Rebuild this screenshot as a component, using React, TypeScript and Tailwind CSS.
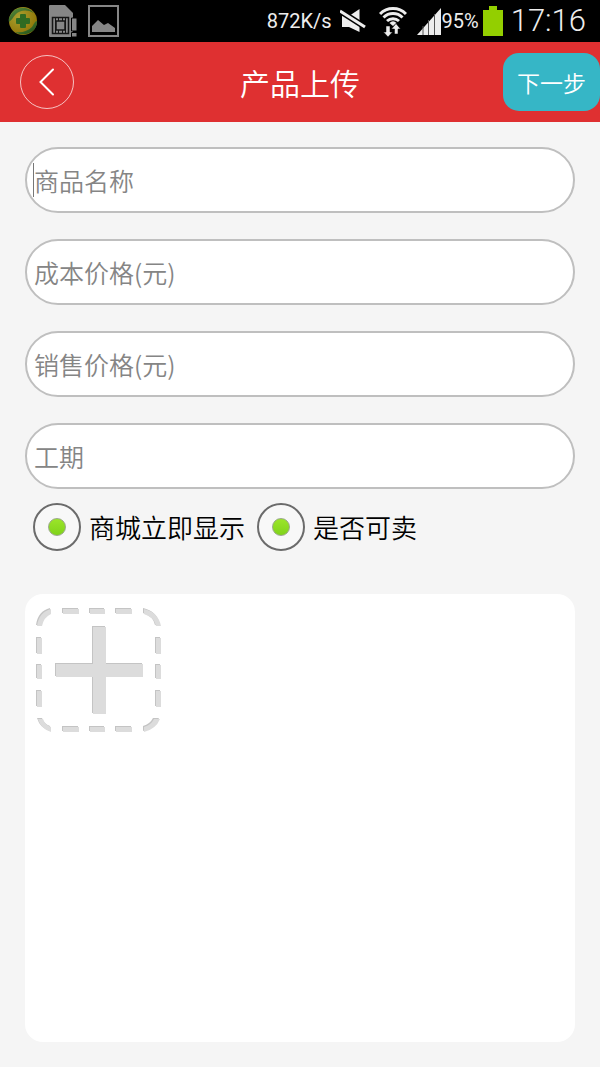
import React, { useState } from 'react';

const FIELDS = [
    { id: 'name', label: '商品名称' },
    { id: 'cost', label: '成本价格(元)' },
    { id: 'price', label: '销售价格(元)' },
    { id: 'period', label: '工期' },
];

const OPTIONS = [
    { id: 'show', label: '商城立即显示' },
    { id: 'sellable', label: '是否可卖' },
];

const ShieldIcon = () => (
    <svg width="30" height="30" viewBox="0 0 30 30" aria-hidden="true">
        <defs>
            <radialGradient id="shield" cx="0.35" cy="0.35" r="0.7">
                <stop offset="0" stopColor="#a8a030" />
                <stop offset="1" stopColor="#8f7406" />
            </radialGradient>
            <linearGradient id="leaf" x1="0" y1="0" x2="1" y2="1">
                <stop offset="0" stopColor="#5d8f3e" />
                <stop offset="1" stopColor="#1c4a14" />
            </linearGradient>
        </defs>
        <circle cx="15" cy="15" r="14" fill="url(#shield)" />
        <path d="M2 10C6 0 19-1 26 7C19 3 12 4 8 8C5 11 4 14 1 16Q0 13 2 10Z" fill="url(#leaf)" />
        <path d="M29 15C30 26 16 32 7 26C14 27 20 25 24 21C26 18 27 15 29 15Z" fill="url(#leaf)" />
        <path d="M13 9h4v4h4v4h-4v4h-4v-4H9v-4h4Z" fill="#2f6b22" stroke="#2f6b22" strokeWidth="2" strokeLinejoin="round" />
    </svg>
);

const SimIcon = () => (
    <svg width="28" height="33" viewBox="0 0 28 33" aria-hidden="true">
        <path d="M1 0H16L24 8V32H1Q0 32 0 31V1Q0 0 1 0Z" fill="#868686" />
        <rect x="3.500" y="12.500" width="16" height="16" fill="none" stroke="#161616" strokeWidth="1.500" />
        <rect x="7" y="16" width="9" height="9" fill="none" stroke="#161616" strokeWidth="1.500" />
        <path d="M9.500 12v4M13.500 12v4M9.500 25v4M13.500 25v4M6.500 12v17M16.500 12v17" stroke="#161616" />
        <path d="M22.500 13H28V26H22.500ZM22.500 27.500H28V32H22.500Z" fill="#868686" stroke="#000" />
    </svg>
);

const PictureIcon = () => (
    <svg width="31" height="32" viewBox="0 0 31 32" aria-hidden="true">
        <rect x="1" y="1" width="29" height="30" fill="none" stroke="#868686" strokeWidth="2" />
        <path d="M4 27V21L10 15L16 20L20 18L27 23V27Z" fill="#868686" />
    </svg>
);

const MuteIcon = () => (
    <svg width="27" height="24" viewBox="0 0 27 24" aria-hidden="true">
        <path d="M2 7H9L19.500 0V23L9 18H2Z" fill="#ededed" />
        <path d="M0 2L25 18" stroke="#000" strokeWidth="6" />
        <path d="M0 2L25 18" stroke="#ededed" strokeWidth="3" />
    </svg>
);

const WifiIcon = () => (
    <svg width="28" height="31" viewBox="0 0 28 31" aria-hidden="true">
        <g fill="none" stroke="#ededed" strokeWidth="3">
            <path d="M1 8A18 18 0 0 1 27 8" />
            <path d="M4.500 11.500A13.500 13.500 0 0 1 23.500 11.500" />
            <path d="M8 15A9 9 0 0 1 20 15" />
        </g>
        <path d="M10.500 17Q14 13.500 17.500 17L14 20Z" fill="#ededed" />
        <path d="M7 20H11V26H13.500L9 31L4.500 26H7ZM15.500 28V23H12.500L17 17.500L21.500 23H19V28Z" fill="#ededed" stroke="#000" strokeWidth="0.500" />
    </svg>
);

const SignalIcon = () => (
    <svg width="24" height="27" viewBox="0 0 24 27" aria-hidden="true">
        <path d="M0 27L24 0V27Z" fill="#ededed" />
        <path d="M6 18V27M11.500 12V27M17.500 6V27" stroke="#555" />
    </svg>
);

const BatteryIcon = () => (
    <svg width="20" height="30" viewBox="0 0 20 30" aria-hidden="true">
        <path d="M6 0H14V4H20V30H0V4H6Z" fill="#93cf00" />
    </svg>
);

const StatusBar = () => (
    <div className="flex h-[42px] items-center justify-between bg-black pr-[14px] pl-2 font-['Roboto',sans-serif] font-normal text-[#ededed]">
        <div className="flex items-center gap-[11px]">
            <ShieldIcon />
            <SimIcon />
            <PictureIcon />
        </div>
        <div className="flex items-center">
            <span className="mr-2 text-[20px]">872K/s</span>
            <MuteIcon />
            <span className="mr-[10px] ml-3"><WifiIcon /></span>
            <SignalIcon />
            <span className="mr-1 ml-px text-[20px]">95%</span>
            <BatteryIcon />
            <span className="ml-2 text-[31px] leading-10 font-light">17:16</span>
        </div>
    </div>
);

const Header = () => (
    <header className="grid h-20 grid-cols-[1fr_auto_1fr] items-center bg-[#df3031] text-white">
        <button
            type="button"
            aria-label="返回"
            className="ml-5 flex h-[54px] w-[54px] items-center justify-center rounded-full border border-white/70"
        >
            <svg width="16" height="28" viewBox="0 0 16 28" fill="none" stroke="#fff" strokeWidth="2" aria-hidden="true">
                <path d="M14 1.500L1.500 14L14 26.500" strokeLinecap="round" />
            </svg>
        </button>
        <h1 className="text-[30px] leading-10">产品上传</h1>
        <button
            type="button"
            className="h-[58px] w-[97px] justify-self-end rounded-2xl bg-[#36b6c6] text-[23px]"
        >
            下一步
        </button>
    </header>
);

const DASHES =
    'M26 1H42V6H26ZM53 1H68V6H53ZM79 1H95V6H79Z' +
    'M26 119H42V124H26ZM53 119H68V124H53ZM79 119H95V124H79Z' +
    'M0 30H5V46H0ZM0 57H5V71H0ZM0 83H5V99H0Z' +
    'M119 30H124V46H119ZM119 57H124V71H119ZM119 83H124V99H119Z' +
    'M0 18Q2 4 14 1V6Q7 9 5 18Z' +
    'M107 1Q121 4 124 18H119Q117 9 107 6Z' +
    'M1 111H6Q8 117 14 119V124Q4 121 1 111Z' +
    'M123 111H117Q114 117 107 119V124Q119 121 123 111Z';

const PLUS = 'M56 19H69V56H106V69H69V106H56V69H19V56H56Z';

const AddPhotoIcon = () => (
    <svg width="126" height="126" viewBox="0 0 126 126" aria-hidden="true">
        <path d={DASHES + PLUS} fill="#c4c4c4" />
        <path d={DASHES + PLUS} fill="#dcdcdc" transform="translate(1 1)" />
    </svg>
);

const App: React.FC = () => {
    const [values, setValues] = useState<Record<string, string>>({});

    return (
        <div className="flex min-h-screen flex-col bg-[#f5f5f5] font-['Noto_Sans_CJK_SC',sans-serif] font-[350]">
            <StatusBar />
            <Header />
            <form className="flex flex-1 flex-col px-[25px] py-[25px]">
                <div className="flex flex-col gap-[26px]">
                    {FIELDS.map((field, i) => (
                        <div key={field.id} className="relative">
                            <input
                                id={field.id}
                                type="text"
                                aria-label={field.label}
                                placeholder={field.label}
                                value={values[field.id] ?? ''}
                                onChange={(e) => setValues({ ...values, [field.id]: e.target.value })}
                                className="block h-[66px] w-full rounded-full border-2 border-[#bfbfbf] bg-white px-[7px] text-[25px] text-black outline-none placeholder:text-[#858585]"
                            />
                            {/* resting text cursor of the first field */}
                            {i === 0 && !values[field.id] && (
                                <span className="pointer-events-none absolute top-4 left-2 h-[34px] w-px bg-[#777]" />
                            )}
                        </div>
                    ))}
                </div>

                <div className="mt-[14px] flex flex-wrap items-center gap-x-3 pl-2">
                    {OPTIONS.map((option) => (
                        <label key={option.id} className="flex items-center gap-2 text-[26px] leading-[48px] text-black">
                            <input
                                type="radio"
                                name={option.id}
                                defaultChecked
                                className="flex h-12 w-12 shrink-0 appearance-none items-center justify-center rounded-full border-2 border-[#6b6b6b] bg-[#f8f8f8] before:h-[18px] before:w-[18px] before:rounded-full checked:before:border checked:before:border-[#9aa88a] checked:before:bg-linear-to-b checked:before:from-[#9be529] checked:before:to-[#80d31a]"
                            />
                            {option.label}
                        </label>
                    ))}
                </div>

                <div className="mt-[43px] flex-1 rounded-[18px] bg-white pt-[13px] pb-4 pl-[11px]">
                    <button type="button" aria-label="添加图片" className="block">
                        <AddPhotoIcon />
                    </button>
                </div>
            </form>
        </div>
    );
};

export default App;
